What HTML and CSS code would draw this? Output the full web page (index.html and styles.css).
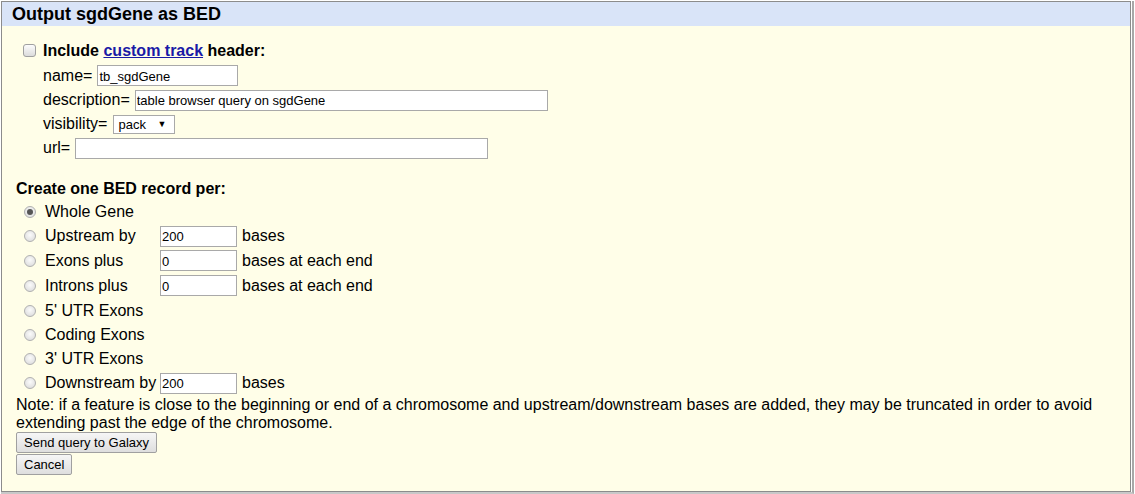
FILE: index.html
```html
<!DOCTYPE html>
<html>
<head>
<meta charset="utf-8">
<title>Output sgdGene as BED</title>
<link rel="stylesheet" href="styles.css">
</head>
<body>
<div class="frame">
  <div class="panel">
    <div class="title">Output sgdGene as BED</div>
    <div class="content">
      <div class="hdr">
        <div class="row r25 first"><span class="check"></span><b>Include <a href="#">custom track</a> header:</b></div>
        <div class="row r25 ind">name=<input class="txt w-name" value="tb_sgdGene"></div>
        <div class="row r24 ind">description=<input class="txt w-long" value="table browser query on sgdGene"></div>
        <div class="row r24 ind">visibility=<span class="sel"><select><option>pack</option></select></span></div>
        <div class="row r24 ind">url=<input class="txt w-long" value=""></div>
      </div>
      <div class="section">Create one BED record per:</div>
      <div class="opts">
        <span class="radio on"></span><span class="lbl">Whole Gene</span><span class="extra"></span>
        <span class="radio"></span><span class="lbl">Upstream by</span><span class="extra"><input class="txt w-num" value="200"><span class="suf">bases</span></span>
        <span class="radio"></span><span class="lbl">Exons plus</span><span class="extra"><input class="txt w-num" value="0"><span class="suf">bases at each end</span></span>
        <span class="radio"></span><span class="lbl">Introns plus</span><span class="extra"><input class="txt w-num" value="0"><span class="suf">bases at each end</span></span>
        <span class="radio"></span><span class="lbl">5' UTR Exons</span><span class="extra"></span>
        <span class="radio"></span><span class="lbl">Coding Exons</span><span class="extra"></span>
        <span class="radio"></span><span class="lbl">3' UTR Exons</span><span class="extra"></span>
        <span class="radio"></span><span class="lbl">Downstream by</span><span class="extra"><input class="txt w-num" value="200"><span class="suf">bases</span></span>
      </div>
      <p class="note">Note: if a feature is close to the beginning or end of a chromosome and upstream/downstream bases are added, they may be truncated in order to avoid extending past the edge of the chromosome.</p>
      <div class="buttons">
        <button class="btn">Send query to Galaxy</button>
        <button class="btn">Cancel</button>
      </div>
    </div>
  </div>
</div>
</body>
</html>
```

FILE: styles.css
```css
html, body {
  margin: 0;
  padding: 0;
  background: #ffffff;
}
body {
  font-family: "Liberation Sans", Arial, sans-serif;
  font-size: 16px;
  color: #000;
}
.frame {
  margin: 1px 0 0 1px;
  width: 1133px;
  height: 493px;
  box-sizing: border-box;
  border-right: 2px solid #a8a8a8;
  border-bottom: 2px solid #c8c8c8;
}
.panel {
  width: 1130px;
  height: 491px;
  box-sizing: border-box;
  border: 1px solid #8c8c8c;
  background: #fffee8;
}
.title {
  height: 24px;
  background: #d9e4f8;
  font-weight: bold;
  font-size: 18px;
  line-height: 24px;
  padding-left: 10px;
}
.content {
  padding: 12px 0 0 14px;
}
.row {
  display: flex;
  align-items: center;
  white-space: nowrap;
}
.r25 { height: 25px; }
.r24 { height: 24px; }
.first { padding-left: 7px; }
.ind { padding-left: 27px; }
a { color: #1a1aa6; }
.check {
  width: 13px;
  height: 13px;
  box-sizing: border-box;
  border: 1px solid #a0a0a0;
  border-radius: 3px;
  background: linear-gradient(#fcfcfc, #dcdcdc);
  margin-right: 7px;
}
.txt {
  height: 21px;
  box-sizing: border-box;
  border: 1px solid #a9a9a9;
  background: #fff;
  font-family: "Liberation Sans", Arial, sans-serif;
  font-size: 13px;
  padding: 1px 1px 0;
  margin: 0 0 0 5px;
  color: #000;
  outline: none;
}
.w-name { width: 141px; }
.w-long { width: 413px; }
.w-num { width: 77px; margin: 0; }
.sel {
  position: relative;
  display: inline-block;
  margin-left: 6px;
}
.sel select {
  appearance: none;
  -webkit-appearance: none;
  width: 62px;
  height: 19px;
  box-sizing: border-box;
  border: 1px solid #a9a9a9;
  border-radius: 0;
  background: #fff;
  font-family: "Liberation Sans", Arial, sans-serif;
  font-size: 13px;
  padding: 0 0 0 4px;
  color: #000;
  display: block;
}
.sel::after {
  content: "\25BC";
  position: absolute;
  right: 9px;
  top: 4px;
  font-size: 9px;
  line-height: 10px;
  color: #000;
  pointer-events: none;
}
.section {
  margin-top: 18px;
  height: 22px;
  line-height: 22px;
  font-weight: bold;
}
.opts {
  display: grid;
  grid-template-columns: 29px 115px auto;
  grid-template-rows: 24px 24px 25px 25px 25px 24px 24px 24px;
  align-items: center;
  white-space: nowrap;
}
.radio {
  width: 12px;
  height: 12px;
  box-sizing: border-box;
  border: 1px solid #b0b0b0;
  border-radius: 50%;
  background: radial-gradient(circle at 50% 40%, #fbfbfb, #d8d8d8);
  margin-left: 8px;
  position: relative;
}
.radio.on::after {
  content: "";
  position: absolute;
  left: 2px;
  top: 2px;
  width: 6px;
  height: 6px;
  border-radius: 50%;
  background: #555;
}
.extra {
  display: flex;
  align-items: center;
}
.suf { margin-left: 5px; }
.note {
  margin: 0;
  line-height: 18px;
  padding: 1px 16px 0 0;
}
.buttons {
  display: flex;
  flex-direction: column;
  align-items: flex-start;
  gap: 1px;
}
.btn {
  height: 21px;
  box-sizing: border-box;
  border: 1px solid #a0a0a0;
  border-radius: 2px;
  background: linear-gradient(#f6f6f6, #dedede);
  font-family: "Liberation Sans", Arial, sans-serif;
  font-size: 13px;
  padding: 0 7px;
  color: #000;
}
```
